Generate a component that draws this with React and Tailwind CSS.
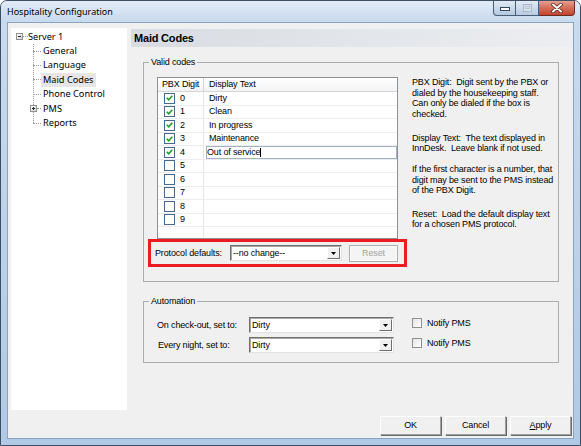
import React from "react";

const rows = [
  { digit: 0, text: "Dirty", checked: true },
  { digit: 1, text: "Clean", checked: true },
  { digit: 2, text: "In progress", checked: true },
  { digit: 3, text: "Maintenance", checked: true },
  { digit: 4, text: "Out of service", checked: true, editing: true },
  { digit: 5, text: "", checked: false },
  { digit: 6, text: "", checked: false },
  { digit: 7, text: "", checked: false },
  { digit: 8, text: "", checked: false },
  { digit: 9, text: "", checked: false },
];

const help = [
  {
    gap: "mt-0",
    lines: [
      "PBX Digit:  Digit sent by the PBX or",
      "dialed by the housekeeping staff.",
      "Can only be dialed if the box is",
      "checked.",
    ],
  },
  {
    gap: "mt-[13.5px]",
    lines: ["Display Text:  The text displayed in", "InnDesk.  Leave blank if not used."],
  },
  {
    gap: "mt-[10.5px]",
    lines: [
      "If the first character is a number, that",
      "digit may be sent to the PMS instead",
      "of the PBX Digit.",
    ],
  },
  {
    gap: "mt-[13px]",
    lines: ["Reset:  Load the default display text", "for a chosen PMS protocol."],
  },
];

const treeItems = [
  { label: "General" },
  { label: "Language" },
  { label: "Maid Codes", selected: true },
  { label: "Phone Control" },
  { label: "PMS", plus: true },
  { label: "Reports" },
];

function TreeBox({ plus, className = "" }) {
  return (
    <span
      className={`relative w-[7px] h-[7px] border border-[#919191] bg-linear-to-br from-white to-[#d4d4d4] flex items-center justify-center ${className}`}
    >
      <span className="absolute w-[3px] h-px bg-[#2b2b2b]" />
      {plus && <span className="absolute w-px h-[3px] bg-[#2b2b2b]" />}
    </span>
  );
}

function GridCheck({ checked }) {
  return (
    <span className="w-[11px] h-[11px] border border-[#47698f] bg-white flex items-center justify-center shrink-0">
      {checked && (
        <svg width="7" height="6" viewBox="0 0 7 6">
          <path d="M0.7 2.8 2.7 4.8 6.3 0.8" fill="none" stroke="#1f9e2a" strokeWidth="1.6" />
        </svg>
      )}
    </span>
  );
}

function PlainCheck() {
  return (
    <span className="w-[10px] h-[10px] border border-[#8e8f8f] bg-linear-to-br from-[#e4e4e4] to-white shrink-0" />
  );
}

function Combo({ value, className = "" }) {
  return (
    <div
      className={`flex h-[16px] bg-white border border-[#6f6f6f] border-r-[#e3e3e3] border-b-[#e3e3e3] shadow-[inset_1px_1px_0_#a9a9a9] ${className}`}
    >
      <span className="flex-1 pl-[2px] leading-[14px] whitespace-nowrap overflow-hidden">{value}</span>
      <span className="w-[13px] h-[12px] mt-px mr-px bg-[#f0f0f0] border border-white border-r-[#6d6d6d] border-b-[#6d6d6d] flex items-center justify-center">
        <svg width="5" height="3" viewBox="0 0 5 3">
          <path d="M0 0h5L2.5 3z" fill="#000" />
        </svg>
      </span>
    </div>
  );
}

function Button({ children, className = "" }) {
  return (
    <button
      className={`h-[19px] w-[61px] bg-[#f0f0f0] border border-white border-r-[#a0a0a0] border-b-[#a0a0a0] shadow-[1px_1px_0_#696969] leading-[17px] text-center ${className}`}
    >
      {children}
    </button>
  );
}

export default function App() {
  return (
    <div className="w-[581px] h-[446px] flex flex-col border border-[#3f4f63] rounded-t-[7px] bg-linear-to-b from-[#c9dbef] to-[#b1c9e5] text-black font-['Liberation_Sans',Arial,sans-serif] text-[9px] leading-[11px] tracking-[-0.15px] overflow-hidden">
      {/* Title bar */}
      <div className="h-[21px] flex items-start shrink-0 bg-linear-to-b from-[#e1ebf6] to-[#c8daee]">
        <span className="ml-[6px] mt-[5px] font-['Noto_Sans',sans-serif] text-[9px] leading-[12px] tracking-normal">
          Hospitality Configuration
        </span>
        <div className="ml-auto mr-[5px] -mt-px flex h-[16px]">
          <div className="w-[23px] h-full rounded-bl-[4px] border border-t-0 border-[#4b5d74] bg-linear-to-b from-[#e4edf7] to-[#b4c8df] flex items-center justify-center">
            <span className="w-[10px] h-[4px] mt-[3px] bg-white border border-[#34465b]" />
          </div>
          <div className="w-[23px] h-full border-b border-r border-[#4b5d74] bg-linear-to-b from-[#e4edf7] to-[#b8cbe0] flex items-center justify-center">
            <span className="w-[9px] h-[8px] border border-[#a9b8c9] bg-[#d6e1ed] flex items-center justify-center">
              <span className="w-[5px] h-[3px] border border-[#b9c6d4]" />
            </span>
          </div>
          <div className="w-[36px] h-full rounded-br-[4px] border-b border-r border-[#6e2a20] bg-linear-to-b from-[#e9a797] via-[#d4705b] to-[#c2432e] flex items-center justify-center">
            <svg width="12" height="10" viewBox="0 0 12 10">
              <path d="M2 1.5 10 8.5M10 1.5 2 8.5" stroke="#4a1b14" strokeWidth="3.4" strokeLinecap="round" />
              <path d="M2 1.5 10 8.5M10 1.5 2 8.5" stroke="#fff" strokeWidth="2" strokeLinecap="round" />
            </svg>
          </div>
        </div>
      </div>

      {/* Client area */}
      <div className="mx-[6px] mb-[6px] flex-1 min-h-0 border border-[#8aa3bf] bg-[#f0f0f0] flex items-start">
        {/* Tree */}
        <div className="w-[116px] h-[382px] ml-[3px] mt-[5px] pt-[1.5px] bg-white font-['Noto_Sans',sans-serif] text-[9.2px] tracking-normal">
          <div className="h-[14.4px] flex items-center">
            <TreeBox className="ml-[5px]" />
            <span className="w-[5px] border-t border-dotted border-[#9a9a9a]" />
            <span>Server 1</span>
          </div>
          <div className="relative">
            <span className="absolute left-[22px] top-0 bottom-[7px] border-l border-dotted border-[#9a9a9a]" />
            {treeItems.map((item) => (
              <div key={item.label} className="h-[14.4px] flex items-center">
                {item.plus ? (
                  <>
                    <TreeBox plus className="ml-[19px]" />
                    <span className="w-[4px] border-t border-dotted border-[#9a9a9a]" />
                  </>
                ) : (
                  <span className="ml-[22px] w-[8px] border-t border-dotted border-[#9a9a9a]" />
                )}
                <span
                  className={`px-[2px] leading-[14px] ${item.selected ? "bg-[#e6e6e6]" : ""}`}
                >
                  {item.label}
                </span>
              </div>
            ))}
          </div>
        </div>

        {/* Right panel */}
        <div className="flex-1 ml-[4px] mt-[6px] flex flex-col">
          <div className="h-[18px] pl-[3px] flex items-center bg-linear-to-r from-[#d8dce2] to-[#eceef1] font-bold text-[11px] tracking-[-0.2px]">
            Maid Codes
          </div>

          {/* Valid codes */}
          <div className="relative mt-[15px] ml-[12px] w-[416px] h-[220px] border border-[#acacac] pt-[14px] pl-[4px]">
            <span className="absolute -top-[6px] left-[5px] px-[2px] bg-[#f0f0f0]">Valid codes</span>
            <div className="flex items-start">
              <div className="ml-[9px] w-[241px] h-[162px] border border-[#8c8f94] bg-white flex flex-col">
                <div className="h-[14px] flex border-b border-[#d5d5d5] bg-linear-to-b from-white to-[#f2f3f5] shrink-0">
                  <div className="w-[46px] border-r border-[#d5d5d5] pl-[4px] flex items-center">PBX Digit</div>
                  <div className="pl-[5px] flex items-center">Display Text</div>
                </div>
                {rows.map((r) => (
                  <div key={r.digit} className="h-[13.5px] flex border-b border-[#ededed] shrink-0">
                    <div className="w-[46px] border-r border-[#e6e6e6] pl-[6px] flex items-center">
                      <GridCheck checked={r.checked} />
                      <span className="ml-[5px]">{r.digit}</span>
                    </div>
                    {r.editing ? (
                      <div className="flex-1 ml-[2px] border border-[#9fb1c5] flex items-center">
                        <span>{r.text}</span>
                        <span className="w-px h-[9px] bg-black" />
                      </div>
                    ) : (
                      <div className="flex-1 pl-[5px] flex items-center">{r.text}</div>
                    )}
                  </div>
                ))}
                <div className="flex-1 flex">
                  <div className="w-[46px] border-r border-[#e6e6e6]" />
                </div>
              </div>
              <div className="ml-[14px] leading-[10.5px] whitespace-pre">
                {help.map((p, i) => (
                  <div key={i} className={p.gap}>
                    {p.lines.map((l) => (
                      <div key={l}>{l}</div>
                    ))}
                  </div>
                ))}
              </div>
            </div>
            {/* Protocol defaults */}
            <div className="w-[259px] h-[28px] border-[3px] border-[#ec1c24] flex items-center pl-[4px]">
              <span className="w-[75px] mt-[1px]">Protocol defaults:</span>
              <Combo value="--no change--" className="w-[112px]" />
              <button className="ml-[7px] w-[49px] h-[17px] bg-[#f4f4f4] border border-[#adadad] shadow-[inset_0_0_0_1px_#fbfbfb] text-[#a3a3a3] leading-[15px]">
                Reset
              </button>
            </div>
          </div>

          {/* Automation */}
          <div className="relative mt-[19px] ml-[12px] w-[416px] h-[62px] border border-[#acacac] pt-[15px] pl-[13px] flex flex-col gap-[4px]">
            <span className="absolute -top-[6px] left-[5px] px-[2px] bg-[#f0f0f0]">Automation</span>
            <div className="flex items-center">
              <span className="w-[92px]">On check-out, set to:</span>
              <Combo value="Dirty" className="w-[145px]" />
              <div className="ml-[18px] mb-[4px] flex items-center">
                <PlainCheck />
                <span className="ml-[5px]">Notify PMS</span>
              </div>
            </div>
            <div className="flex items-center">
              <span className="w-[92px] pl-[1px]">Every night, set to:</span>
              <Combo value="Dirty" className="w-[145px]" />
              <div className="ml-[18px] mb-[4px] flex items-center">
                <PlainCheck />
                <span className="ml-[5px]">Notify PMS</span>
              </div>
            </div>
          </div>

          {/* Buttons */}
          <div className="mt-[53px] self-end mr-[2px] flex gap-[4px]">
            <Button>OK</Button>
            <Button>Cancel</Button>
            <Button className="w-[60px]">
              <span className="underline">A</span>pply
            </Button>
          </div>
        </div>
      </div>
    </div>
  );
}
